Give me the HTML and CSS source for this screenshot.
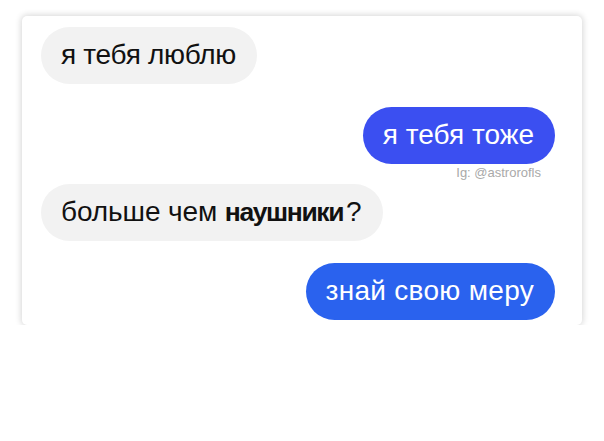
FILE: index.html
```html
<!DOCTYPE html>
<html lang="ru">
<head>
<meta charset="utf-8">
<link rel="stylesheet" href="styles.css">
</head>
<body>
<div class="card">
  <div class="row left"><div class="bubble gray b1"><span>я тебя люблю</span></div></div>
  <div class="row right gap1"><div class="bubble blue1"><span>я тебя тоже</span></div></div>
  <div class="caption">Ig: @astrorofls</div>
  <div class="row left gap2"><div class="bubble gray b3"><span>больше чем <b>наушники</b>?</span></div></div>
  <div class="row right gap3"><div class="bubble blue2"><span>знай свою меру</span></div></div>
</div>
</body>
</html>
```
FILE: styles.css
```css
html, body {
  margin: 0;
  padding: 0;
  background: #ffffff;
}
body {
  font-family: "Liberation Sans", Arial, sans-serif;
}
.card {
  margin: 16px 0 0 22px;
  width: 560px;
  height: 309px;
  box-sizing: border-box;
  padding: 11px 27px 0 19px;
  background: #ffffff;
  border-radius: 5px;
  box-shadow: 0 0 6px 1px rgba(0, 0, 0, 0.16);
  display: flex;
  flex-direction: column;
}
.row {
  display: flex;
}
.row.left { justify-content: flex-start; }
.row.right { justify-content: flex-end; }
.gap1 { margin-top: 23px; }
.gap2 { margin-top: 5px; }
.gap3 { margin-top: 22px; }
.bubble {
  height: 57px;
  box-sizing: border-box;
  display: flex;
  align-items: center;
  padding: 0 21px 2px 20px;
  border-radius: 28.5px;
  font-size: 28px;
  color: #111111;
  white-space: nowrap;
}
.b1 span {
  letter-spacing: -0.3px;
}
.b3 span {
  letter-spacing: -0.1px;
}
.bubble b {
  font-weight: bold;
  font-size: 26.5px;
  letter-spacing: -1.4px;
  margin-right: 3px;
}
.gray { background: #f2f2f2; }
.blue1 { background: #3b4ff1; color: #ffffff; }
.blue2 { background: #2a62ee; color: #ffffff; }
.blue2 span {
  letter-spacing: 0.3px;
}
.caption {
  margin-top: 2px;
  height: 13px;
  line-height: 13px;
  font-size: 13px;
  color: #a9a9a9;
  text-align: right;
  padding-right: 14px;
}
```
